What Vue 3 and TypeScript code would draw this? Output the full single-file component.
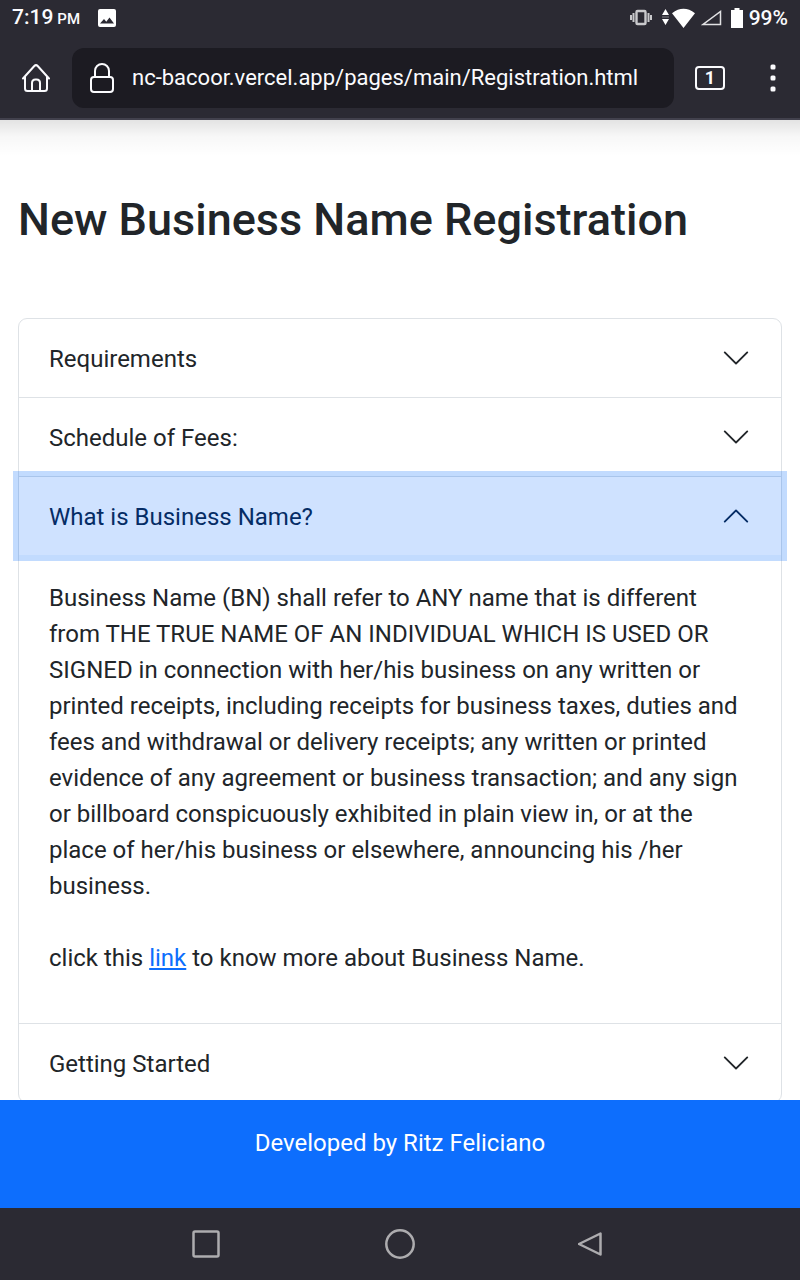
<script setup lang="ts">
import { ref } from 'vue'

interface Section {
  id: string
  title: string
}

const sections: Section[] = [
  { id: 'requirements', title: 'Requirements' },
  { id: 'fees', title: 'Schedule of Fees:' },
  { id: 'business-name', title: 'What is Business Name?' },
  { id: 'getting-started', title: 'Getting Started' },
]

const openId = ref<string>('business-name')
const address = ref<string>('nc-bacoor.vercel.app/pages/main/Registration.html')

function toggle(id: string): void {
  openId.value = openId.value === id ? '' : id
}
</script>

<template>
  <div class="screen">
    <header class="browser">
      <div class="status">
        <span class="clock">7:19<small>PM</small></span>
        <svg class="picture" width="18" height="18" viewBox="0 0 18 18" aria-hidden="true">
          <path fill="#fff" fill-rule="evenodd" d="M2 0h14a2 2 0 0 1 2 2v14a2 2 0 0 1-2 2H2a2 2 0 0 1-2-2V2a2 2 0 0 1 2-2zM2 14.500h14l-4.500-6-3.200 4.200-2.300-2.700z" />
        </svg>
        <div class="signals">
          <svg width="22" height="18" viewBox="0 0 22 18" aria-hidden="true">
            <rect x="6.500" y="2" width="9" height="13" rx="1" fill="none" stroke="#c9c9cc" stroke-width="2.400" />
            <path d="M3.500 4v9M18.500 4v9M1 6v5M21 6v5" stroke="#c9c9cc" stroke-width="2" />
          </svg>
          <svg class="wifi" width="34" height="20" viewBox="0 0 34 20" aria-hidden="true">
            <path fill="#fff" d="M4.500 1l3.500 6H1zM4.500 17L1 11h7zM11 5.200Q22.500-3.500 34 5.200L22.500 20z" />
            <path d="M1 9h7" stroke="#85848a" stroke-width="1" />
          </svg>
          <svg class="cell" width="21" height="16" viewBox="0 0 21 16" aria-hidden="true">
            <path d="M2 14.500h17.500V1.500z" fill="none" stroke="#e2e2e4" stroke-width="1.500" />
          </svg>
          <svg class="battery" width="12" height="20" viewBox="0 0 12 20" aria-hidden="true">
            <path fill="#fff" d="M3.500 0h5v2H12v18H0V2h3.500z" />
          </svg>
          <span>99%</span>
        </div>
      </div>
      <div class="toolbar">
        <button class="icon-button" type="button" aria-label="Home">
          <svg width="30" height="30" viewBox="0 0 30 30" fill="none" stroke="#fbfbfe" stroke-width="2" stroke-linejoin="round" stroke-linecap="round">
            <path d="M2 15.500L13.300 3q1.700-1.700 3.400 0L28 15.500M4 13.500v12q0 2.500 2.500 2.500h17q2.500 0 2.500-2.500v-12M11 28v-8q0-3.500 3.500-3.500h1q3.500 0 3.500 3.500v8" />
          </svg>
        </button>
        <div class="address">
          <svg width="26" height="32" viewBox="0 0 26 32" fill="none" stroke="#fbfbfe" stroke-width="2" aria-hidden="true">
            <rect x="2" y="15" width="22" height="15" rx="3" />
            <path d="M6 15V9a7 7 0 0 1 14 0v6" />
          </svg>
          <input v-model="address" type="text" aria-label="Address" spellcheck="false" />
        </div>
        <button class="tabs" type="button" aria-label="1 open tab">1</button>
        <button class="menu" type="button" aria-label="Menu">
          <svg width="6" height="28" viewBox="0 0 6 28" fill="#fbfbfe">
            <rect x="0.500" y="0.500" width="5" height="5" rx="1.500" />
            <rect x="0.500" y="11.500" width="5" height="5" rx="1.500" />
            <rect x="0.500" y="22.500" width="5" height="5" rx="1.500" />
          </svg>
        </button>
      </div>
    </header>

    <main class="page">
      <h1>New Business Name Registration</h1>
      <div class="accordion">
        <section v-for="section in sections" :key="section.id" class="item">
          <h2>
            <button
              type="button"
              class="toggle"
              :class="{ open: openId === section.id }"
              :aria-expanded="openId === section.id"
              @click="toggle(section.id)"
            >
              <span>{{ section.title }}</span>
              <svg class="chevron" width="30" height="30" viewBox="0 0 16 16" fill="currentColor" aria-hidden="true">
                <path fill-rule="evenodd" d="M1.646 4.646a.5.5 0 0 1 .708 0L8 10.293l5.646-5.647a.5.5 0 0 1 .708.708l-6 6a.5.5 0 0 1-.708 0l-6-6a.5.5 0 0 1 0-.708z" />
              </svg>
            </button>
          </h2>
          <div v-if="section.id === 'business-name' && openId === section.id" class="body">
            <p>
              Business Name (BN) shall refer to ANY name that is different from THE TRUE NAME OF AN INDIVIDUAL WHICH IS
              USED OR SIGNED in connection with her/his business on any written or printed receipts, including receipts
              for business taxes, duties and fees and withdrawal or delivery receipts; any written or printed evidence of
              any agreement or business transaction; and any sign or billboard conspicuously exhibited in plain view in,
              or at the place of her/his business or elsewhere, announcing his /her business.<br /><br />
              click this <a href="#">link</a> to know more about Business Name.
            </p>
          </div>
        </section>
      </div>
    </main>

    <footer class="credit"><p>Developed by Ritz Feliciano</p></footer>

    <nav class="system" aria-label="System navigation">
      <button type="button" aria-label="Recent apps">
        <svg width="32" height="32" viewBox="0 0 32 32" fill="none" stroke="#adacaf" stroke-width="2.500">
          <rect x="3.500" y="3.500" width="25" height="25" rx="1.500" />
        </svg>
      </button>
      <button type="button" aria-label="Home screen">
        <svg width="32" height="32" viewBox="0 0 32 32" fill="none" stroke="#adacaf" stroke-width="2.500">
          <circle cx="16" cy="16" r="13.700" />
        </svg>
      </button>
      <button type="button" aria-label="Back">
        <svg width="32" height="32" viewBox="0 0 32 32" fill="none" stroke="#adacaf" stroke-width="2.500" stroke-linejoin="round">
          <path d="M1 16L22.500 5.500v21z" />
        </svg>
      </button>
    </nav>
  </div>
</template>

<style>
body {
  margin: 0;
}
</style>

<style scoped>
.screen {
  display: flex;
  flex-direction: column;
  height: 100vh;
  background: #fff;
  color: #212529;
  font-family: Roboto, "Noto Sans", sans-serif;
  font-size: 24px;
  line-height: 36px;
}

button,
input {
  border: 0;
  padding: 0;
  margin: 0;
  background: none;
  color: inherit;
  font: inherit;
}

button {
  cursor: pointer;
}

svg {
  display: block;
  flex: none;
}

.browser {
  position: relative;
  flex: none;
  background: #2b2a33;
  border-bottom: 2px solid #42414d;
  color: #fbfbfe;
}

.browser::after {
  content: "";
  position: absolute;
  top: calc(100% + 2px);
  left: 0;
  right: 0;
  height: 36px;
  background: linear-gradient(rgba(0, 0, 0, 0.11), rgba(0, 0, 0, 0.03) 45%, transparent);
  pointer-events: none;
}

.status {
  display: flex;
  align-items: center;
  height: 36px;
  padding: 0 12px;
  font-size: 21px;
  font-weight: 500;
}

.clock small {
  margin-left: 4px;
  font-size: 15px;
}

.picture {
  margin-left: 18px;
}

.signals {
  display: flex;
  align-items: center;
  margin-left: auto;
}

.wifi {
  margin-left: 9px;
}

.cell {
  margin-left: 6px;
}

.battery {
  margin: 0 6px 0 9px;
}

.toolbar {
  display: flex;
  align-items: center;
  height: 60px;
  padding: 12px 0 10px;
}

.icon-button {
  display: grid;
  place-items: center;
  width: 72px;
  height: 60px;
}

.address {
  display: flex;
  flex: 1;
  align-items: center;
  gap: 17px;
  min-width: 0;
  height: 60px;
  padding: 0 17px;
  box-sizing: border-box;
  border-radius: 12px;
  background: #1c1b22;
}

.address input {
  flex: 1;
  min-width: 0;
  outline: 0;
  font-size: 22px;
}

.tabs {
  width: 30px;
  height: 24px;
  margin-left: 21px;
  box-sizing: border-box;
  border: 2px solid #fbfbfe;
  border-radius: 4px;
  font-size: 18px;
  font-weight: 700;
  line-height: 20px;
}

.menu {
  display: grid;
  place-items: center;
  width: 54px;
  height: 60px;
  margin-left: 21px;
}

.page {
  flex: 1;
  min-height: 0;
  padding: 73px 18px 0;
  overflow: hidden;
}

h1 {
  margin: 0 0 71px;
  font-size: 45px;
  font-weight: 500;
  line-height: 54px;
}

h2 {
  margin: 0;
  font: inherit;
}

.accordion {
  border: 1px solid #dee2e6;
  border-radius: 9px;
}

.item + .item {
  border-top: 1px solid #dee2e6;
}

.toggle {
  display: flex;
  align-items: center;
  justify-content: space-between;
  width: 100%;
  padding: 22px 30px 20px;
  text-align: left;
}

.chevron {
  margin-bottom: 2px;
}

.toggle.open {
  background: #cfe2ff;
  color: #052c65;
  box-shadow: 0 0 0 6px rgba(13, 110, 253, 0.25);
}

.toggle.open .chevron {
  transform: rotate(180deg);
}

.body {
  padding: 25px 30px 23px;
}

.body p {
  margin: 0 0 24px;
}

a {
  color: #0d6efd;
}

.credit {
  flex: none;
  padding: 25px 18px 23px;
  background: #0d6efd;
  color: #fff;
  text-align: center;
}

.credit p {
  margin: 0 0 24px;
}

.system {
  display: flex;
  flex: none;
  align-items: center;
  justify-content: center;
  gap: 162px;
  height: 72px;
  background: #2b2a33;
}
</style>
